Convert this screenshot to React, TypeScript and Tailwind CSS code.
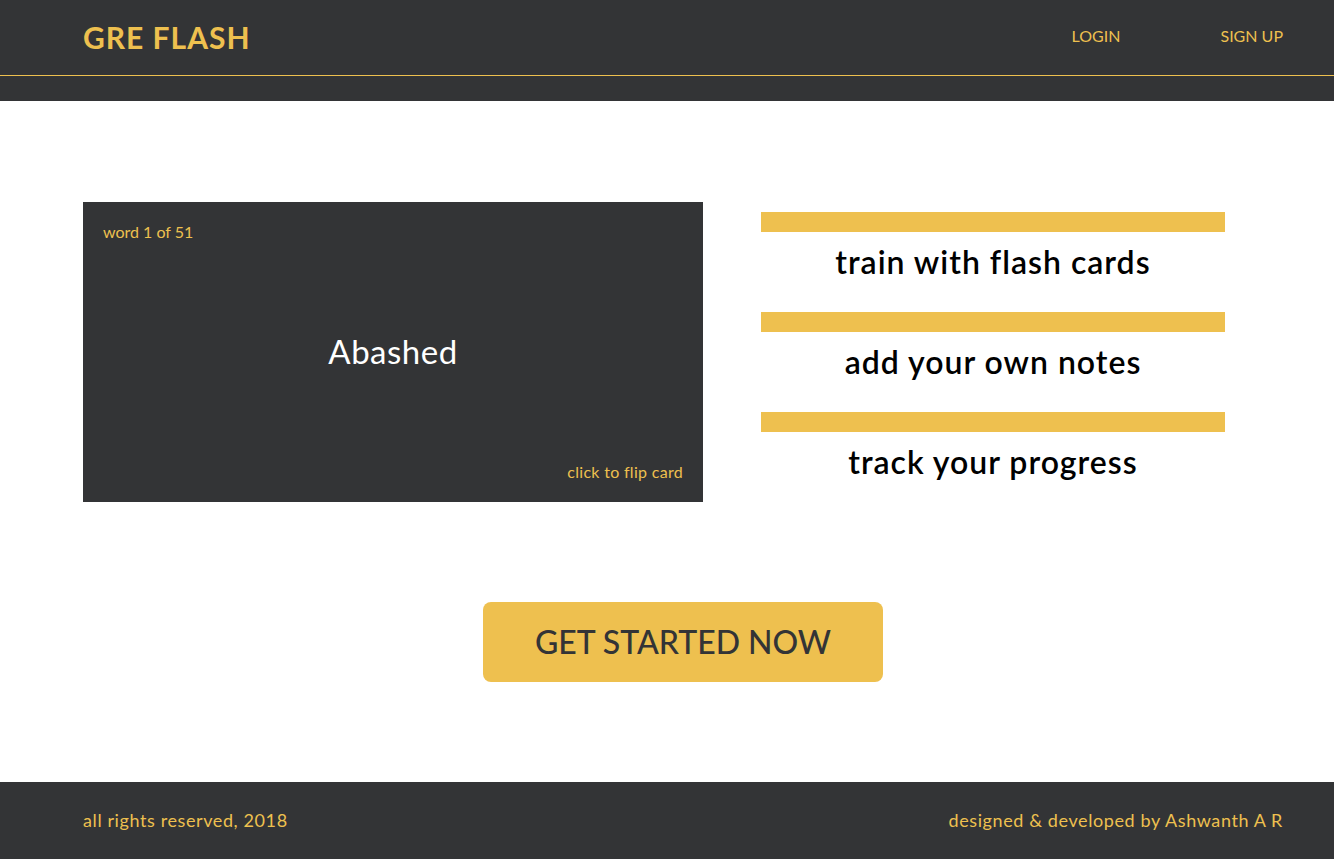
const features = ['train with flash cards', 'add your own notes', 'track your progress']

export default function App() {
  return (
    <div className="w-full h-[859px] overflow-hidden">
      <div className="w-[1366px] h-[859px] flex flex-col bg-white font-['Lato',sans-serif]">
        <header className="h-[101px] bg-[#333436]">
          <div className="h-[75px] px-[83px] flex items-center justify-between">
            <h1 className="text-[30px] font-bold text-[#eec04f] tracking-[1px]">GRE FLASH</h1>
            <nav className="flex items-center gap-[100px] text-[16px] text-[#eec04f] pb-[3px]">
              <a>LOGIN</a>
              <a>SIGN UP</a>
            </nav>
          </div>
          <div className="h-px bg-[#eec04f]" />
        </header>

        <main className="flex-1 flex flex-col">
          <section className="pt-[101px] px-[83px] flex">
            <div className="w-[620px] h-[300px] bg-[#333436] flex flex-col p-5 cursor-pointer">
              <p className="text-[16px] text-[#eec04f] leading-5">word 1 of 51</p>
              <div className="flex-1 flex items-center justify-center text-[33px] text-white tracking-[0.5px]">
                Abashed
              </div>
              <p className="text-right text-[16px] text-[#eec04f] leading-5 tracking-[0.3px]">click to flip card</p>
            </div>
            <ul className="ml-[58px] mt-[10px] w-[464px] flex flex-col gap-[20px]">
              {features.map((f) => (
                <li key={f} className="flex flex-col">
                  <div className="h-[20px] bg-[#eec04f]" />
                  <p className="h-[60px] flex items-center justify-center text-[32px] text-black font-semibold tracking-[1px]">{f}</p>
                </li>
              ))}
            </ul>
          </section>

          <div className="flex justify-center pt-[100px]">
            <button className="w-[400px] h-[80px] rounded-lg bg-[#eec04f] text-[32px] text-[#333436] font-medium">
              GET STARTED NOW
            </button>
          </div>
        </main>

        <footer className="h-[77px] bg-[#333436] px-[83px] flex items-center justify-between text-[18px] text-[#eec04f] tracking-[0.6px]">
          <p>all rights reserved, 2018</p>
          <p>designed &amp; developed by Ashwanth A R</p>
        </footer>
      </div>
    </div>
  )
}
